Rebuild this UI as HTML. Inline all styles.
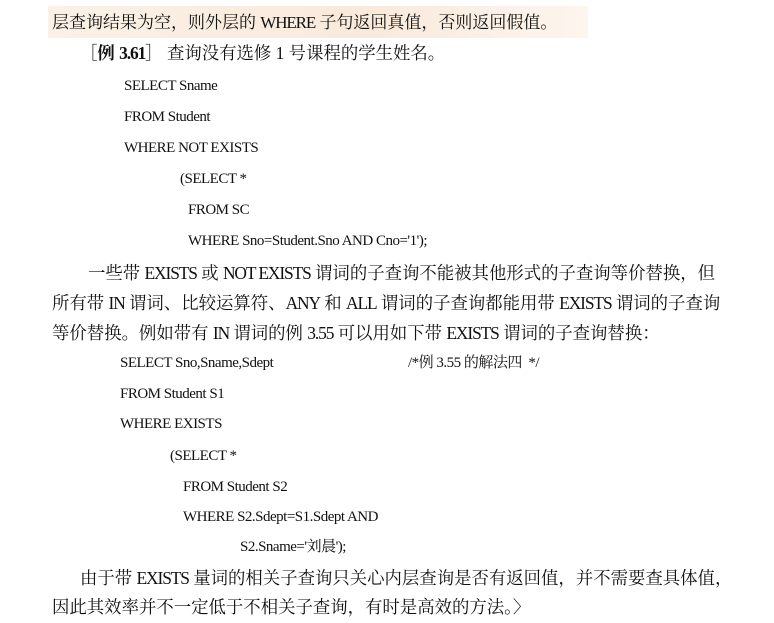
<!DOCTYPE html>
<html><head><meta charset="utf-8"><style>
html,body{margin:0;padding:0;background:#fff;}
body{width:774px;height:623px;position:relative;overflow:hidden;font-family:"Liberation Serif","Noto Serif CJK SC",serif;color:#111;}
.l{position:absolute;white-space:nowrap;line-height:1;}
.p{font-size:17.4px;}
.e{letter-spacing:-1.1px;}
.c{font-size:15px;letter-spacing:-0.5px;}
.hl{position:absolute;left:48px;top:6px;width:540px;height:32px;background:linear-gradient(90deg,#fbf1e6,#f9eadb 60%,#fdf6ee);}
</style></head><body>
<div class="hl"></div>
<div class="l p" style="left:52px;top:14px;font-size:17px;">层查询结果为空，则外层的 <span class="e">WHERE</span> 子句返回真值，否则返回假值。</div>
<div class="l p" style="left:80px;top:45px;"><b>［例 <span class="e">3.61</span>］</b> 查询没有选修 1 号课程的学生姓名。</div>
<div class="l c" style="left:124px;top:79px;">SELECT Sname</div>
<div class="l c" style="left:124px;top:110px;">FROM Student</div>
<div class="l c" style="left:124px;top:141px;">WHERE NOT EXISTS</div>
<div class="l c" style="left:180px;top:172px;">(SELECT *</div>
<div class="l c" style="left:188px;top:203px;">FROM SC</div>
<div class="l c" style="left:188px;top:234px;">WHERE Sno=Student.Sno AND Cno='1');</div>
<div class="l p" style="left:88px;top:265px;">一些带 <span class="e">EXISTS</span> 或 <span class="e">NOT EXISTS</span> 谓词的子查询不能被其他形式的子查询等价替换，但</div>
<div class="l p" style="left:52px;top:295px;">所有带 <span class="e">IN</span> 谓词、比较运算符、<span class="e">ANY</span> 和 <span class="e">ALL</span> 谓词的子查询都能用带 <span class="e">EXISTS</span> 谓词的子查询</div>
<div class="l p" style="left:52px;top:325px;">等价替换。例如带有 <span class="e">IN</span> 谓词的例 <span class="e">3.55</span> 可以用如下带 <span class="e">EXISTS</span> 谓词的子查询替换：</div>
<div class="l c" style="left:120px;top:356px;">SELECT Sno,Sname,Sdept</div>
<div class="l c" style="left:408px;top:356px;">/*例 3.55 的解法四&nbsp; */</div>
<div class="l c" style="left:120px;top:387px;">FROM Student S1</div>
<div class="l c" style="left:120px;top:417px;">WHERE EXISTS</div>
<div class="l c" style="left:170px;top:449px;">(SELECT *</div>
<div class="l c" style="left:183px;top:480px;">FROM Student S2</div>
<div class="l c" style="left:183px;top:510px;">WHERE S2.Sdept=S1.Sdept AND</div>
<div class="l c" style="left:240px;top:540px;">S2.Sname='刘晨');</div>
<div class="l p" style="left:80px;top:570px;">由于带 <span class="e">EXISTS</span> 量词的相关子查询只关心内层查询是否有返回值，并不需要查具体值，</div>
<div class="l p" style="left:52px;top:599px;">因此其效率并不一定低于不相关子查询，有时是高效的方法。〉</div>
</body></html>
